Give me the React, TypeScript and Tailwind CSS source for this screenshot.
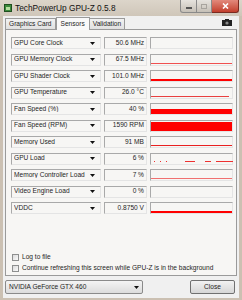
import React from 'react';

type Graph =
  | { kind: 'none' }
  | { kind: 'line'; bottom: number; h: number; color?: string; right?: number }
  | { kind: 'bar'; h: number }
  | { kind: 'dash' };

interface Sensor {
  label: string;
  value: string;
  graph: Graph;
}

const sensors: Sensor[] = [
  { label: 'GPU Core Clock', value: '50.6 MHz', graph: { kind: 'none' } },
  { label: 'GPU Memory Clock', value: '67.5 MHz', graph: { kind: 'line', bottom: 1, h: 1, color: '#f05050' } },
  { label: 'GPU Shader Clock', value: '101.0 MHz', graph: { kind: 'line', bottom: 0, h: 2 } },
  { label: 'GPU Temperature', value: '26.0 °C', graph: { kind: 'line', bottom: 1, h: 1, color: '#e84040', right: 3 } },
  { label: 'Fan Speed (%)', value: '40 %', graph: { kind: 'bar', h: 5 } },
  { label: 'Fan Speed (RPM)', value: '1590 RPM', graph: { kind: 'bar', h: 9 } },
  { label: 'Memory Used', value: '91 MB', graph: { kind: 'line', bottom: 1, h: 1, color: '#e82020' } },
  { label: 'GPU Load', value: '6 %', graph: { kind: 'dash' } },
  { label: 'Memory Controller Load', value: '7 %', graph: { kind: 'line', bottom: 1, h: 1, color: '#f07070' } },
  { label: 'Video Engine Load', value: '0 %', graph: { kind: 'none' } },
  { label: 'VDDC', value: '0.8750 V', graph: { kind: 'line', bottom: 0, h: 2 } },
];

// GPU load trace, [left, width]
const dashes = [
  [3, 1], [9, 1], [15, 1], [34, 10], [54, 6], [65, 17],
];

const Arrow = () => (
  <svg width="5" height="3" viewBox="0 0 5 3" className="shrink-0">
    <path d="M0 0H5L2.5 3Z" fill="#111" />
  </svg>
);

const sunken = 'bg-[#f7f6f4] border-t border-l border-[#a9a9a9] border-b border-r border-b-[#e4e4e4] border-r-[#e4e4e4]';

const GraphBox = ({ graph }: { graph: Graph }) => (
  <div className={`relative w-[83px] h-[12px] ${sunken}`}>
    {graph.kind === 'line' && (
      <div
        className="absolute left-0"
        style={{ bottom: graph.bottom, height: graph.h, right: graph.right ?? 0, background: graph.color ?? '#ff0000' }}
      />
    )}
    {graph.kind === 'bar' && (
      <div className="absolute left-0 right-0 bottom-0 bg-[#ff0000]" style={{ height: graph.h }} />
    )}
    {graph.kind === 'dash' &&
      dashes.map(([l, w], i) => (
        <div key={i} className="absolute bottom-[2px] h-px bg-[#ee3030]" style={{ left: l, width: w }} />
      ))}
  </div>
);

const Checkbox = ({ label }: { label: string }) => (
  <div className="flex items-center gap-[3px] h-[10px]">
    <div className="w-[7px] h-[7px] border border-[#8e8f8f] bg-gradient-to-br from-[#dcdcdc] to-[#fafafa]" />
    <span>{label}</span>
  </div>
);

export default function App() {
  return (
    <div className="w-[242px] h-[300px] bg-[#cbc0b2] flex flex-col font-['Liberation_Sans',Arial,sans-serif] text-[6.6px] text-[#1e1e1e] leading-none overflow-hidden">
      {/* title bar */}
      <div className="h-[16px] flex items-start shrink-0 bg-gradient-to-b from-[#dcd5ca] to-[#cfc6b9]">
        <div className="mt-[4px] ml-[4px] w-[8px] h-[8px] bg-[#3c8a3c] border border-[#1f4f1f] flex items-center justify-center">
          <div className="w-[4px] h-[3px] bg-[#b6e0a0]" />
        </div>
        <span className="mt-[4px] ml-[3px] text-[8.3px] text-[#111]">TechPowerUp GPU-Z 0.5.8</span>
        <div className="ml-auto mr-[3px] flex">
          <div className="w-[17px] h-[13px] border border-t-0 border-[#8a8a8a] rounded-bl-[3px] bg-gradient-to-b from-[#e6e3de] to-[#c6c0b7] flex items-center justify-center">
            <div className="w-[6px] h-[2px] bg-white border-[0.5px] border-[#555] mt-[3px]" />
          </div>
          <div className="w-[15px] h-[13px] border border-t-0 border-l-0 border-[#8a8a8a] bg-gradient-to-b from-[#e6e3de] to-[#c6c0b7] flex items-center justify-center">
            <div className="w-[6px] h-[5px] border border-[#a8a49e]" />
          </div>
          <div className="w-[27px] h-[13px] border border-t-0 border-l-0 border-[#7a2a20] rounded-br-[3px] bg-gradient-to-b from-[#e2897c] to-[#c23d2b] flex items-center justify-center">
            <svg width="7" height="6" viewBox="0 0 7 6">
              <path d="M1 0.5L6 5.5M6 0.5L1 5.5" stroke="#fff" strokeWidth="1.6" />
            </svg>
          </div>
        </div>
      </div>

      {/* body */}
      <div className="flex-1 mx-[3px] mb-[2px] bg-[#f0f0f0] flex flex-col px-[2px]">
        {/* tabs */}
        <div className="h-[13px] flex items-end relative">
          <div className="h-[11px] px-[3px] flex items-center border border-b-0 border-[#9a9a9a] bg-gradient-to-b from-[#f2f2f2] to-[#e0e0e0]">Graphics Card</div>
          <div className="h-[13px] px-[4px] flex items-center border border-b-0 border-[#9a9a9a] bg-[#f9f9f9] -mb-px z-10">Sensors</div>
          <div className="h-[11px] px-[3px] flex items-center border border-b-0 border-l-0 border-[#9a9a9a] bg-gradient-to-b from-[#f2f2f2] to-[#e0e0e0]">Validation</div>
          <svg width="10" height="7" viewBox="0 0 10 7" className="ml-auto mr-[5px] mb-[3px]">
            <rect x="0" y="1" width="10" height="6" fill="#222" />
            <rect x="3" y="0" width="4" height="2" fill="#222" />
            <circle cx="5" cy="4" r="1.6" fill="#888" />
          </svg>
        </div>

        {/* panel */}
        <div className="h-[247px] border border-[#9a9a9a] bg-[#f7f6f4] flex flex-col pt-[7px] pl-[5px] pb-[2px]">
          <div className="flex flex-col gap-[4.5px]">
            {sensors.map((s) => (
              <div key={s.label} className="flex gap-[3px]">
                <div className={`w-[90px] h-[12px] flex items-center pl-[2px] pr-[5px] ${sunken}`}>
                  <span className="flex-1 truncate">{s.label}</span>
                  <Arrow />
                </div>
                <div className={`w-[43px] h-[12px] flex items-center justify-end pr-[2px] ${sunken}`}>
                  {s.value}
                </div>
                <GraphBox graph={s.graph} />
              </div>
            ))}
          </div>
          <div className="flex-1" />
          <div className="flex flex-col gap-[1px] pl-[1px]">
            <Checkbox label="Log to file" />
            <Checkbox label="Continue refreshing this screen while GPU-Z is in the background" />
          </div>
        </div>

        {/* bottom */}
        <div className="flex items-center mt-[4px]">
          <div className="w-[138px] h-[14px] border border-[#8a8a8a] rounded-[2px] bg-gradient-to-b from-[#f4f4f4] to-[#dcdcdc] flex items-center pl-[3px] pr-[3px]">
            <span className="flex-1">NVIDIA GeForce GTX 460</span>
            <Arrow />
          </div>
          <div className="ml-auto mr-[2px] w-[45px] h-[14px] border border-[#707070] rounded-[2px] bg-gradient-to-b from-[#f2f2f2] to-[#d6d6d6] flex items-center justify-center">
            Close
          </div>
        </div>
      </div>
    </div>
  );
}
